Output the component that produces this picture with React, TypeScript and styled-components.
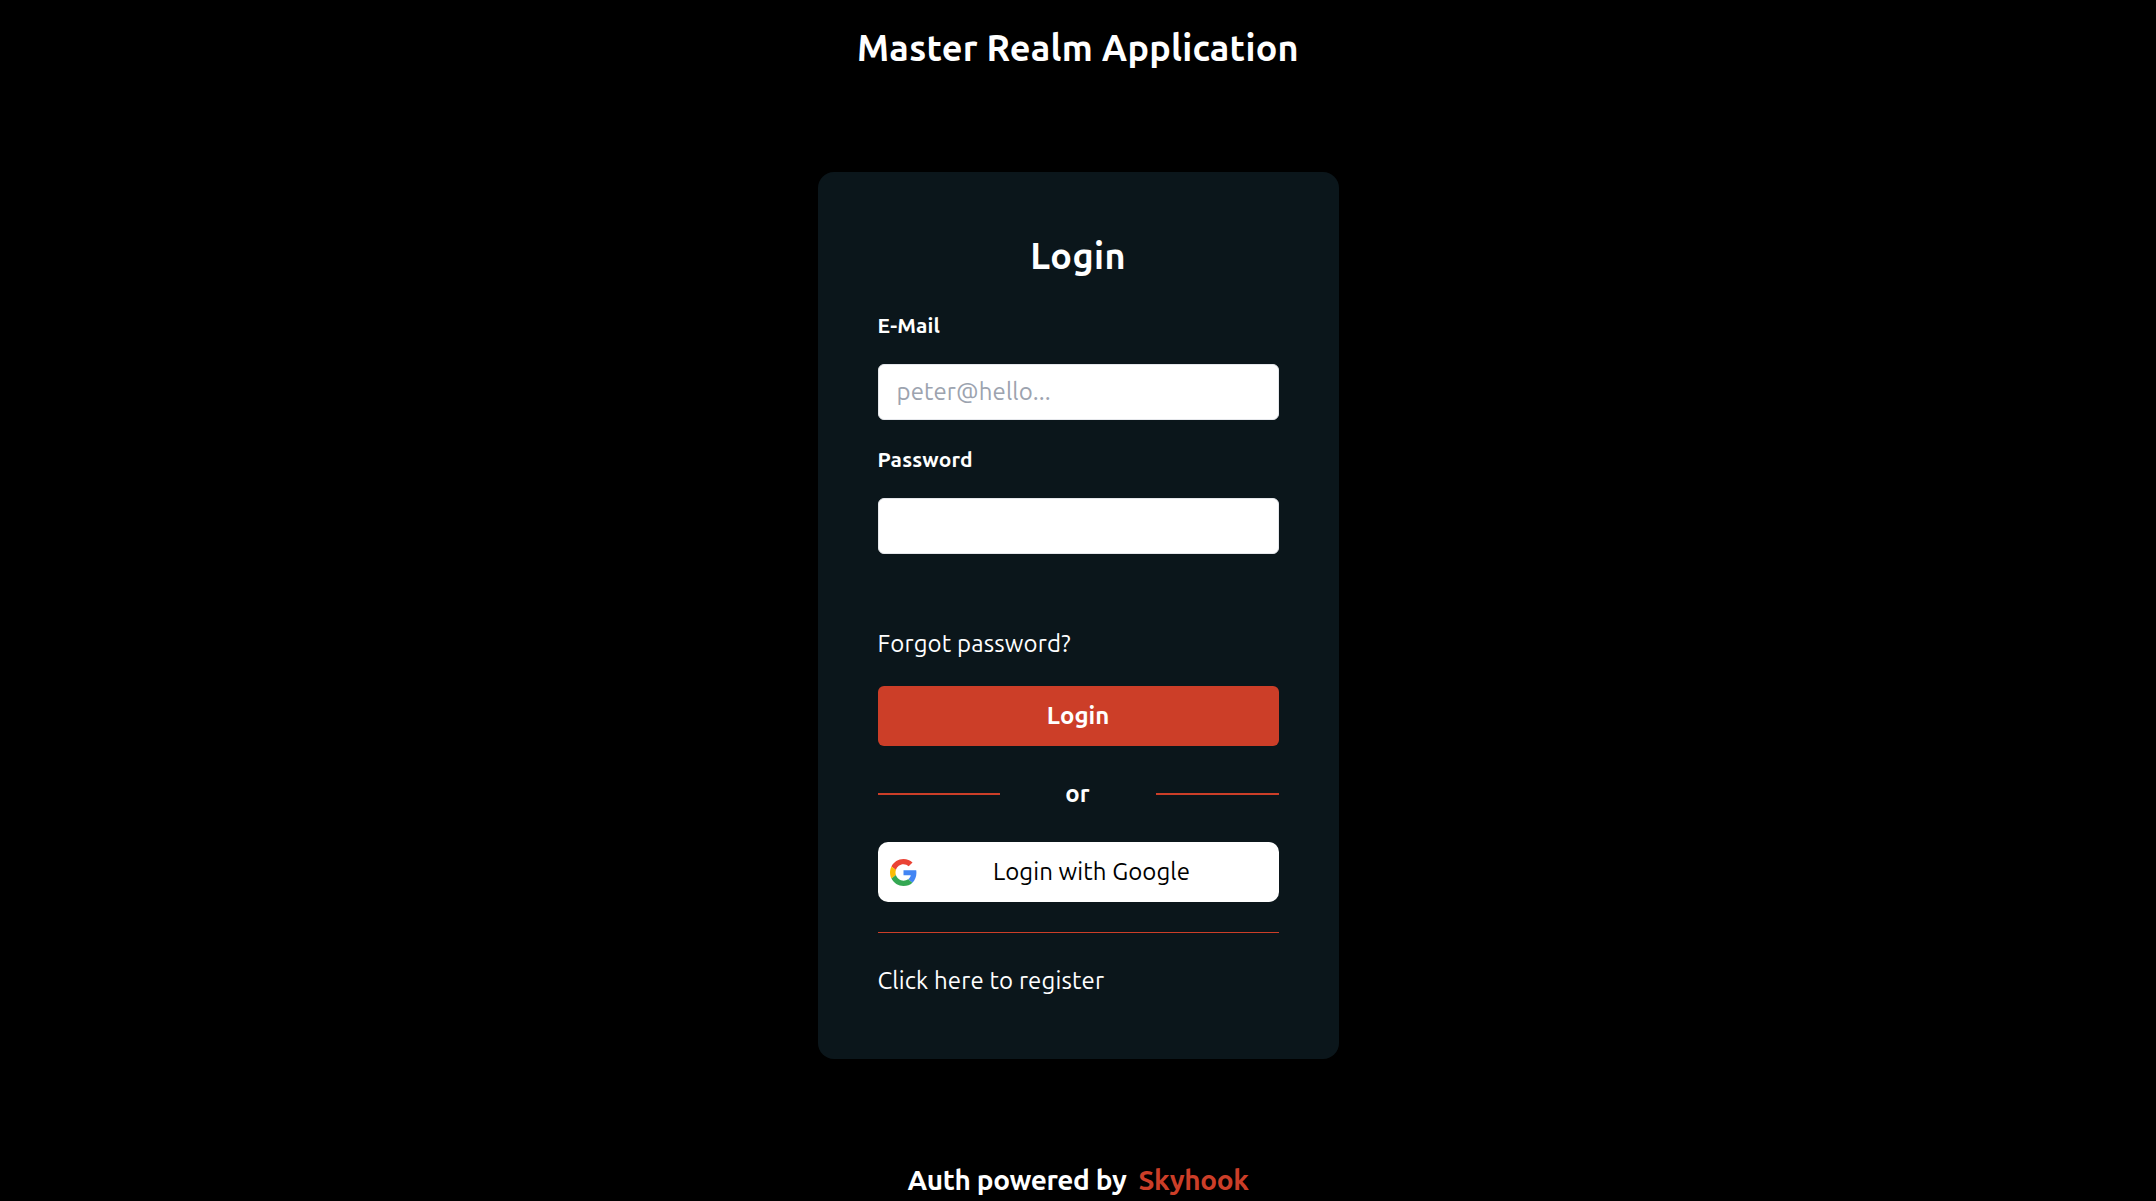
import React from "react";
import styled, { createGlobalStyle } from "styled-components";

const Global = createGlobalStyle`
  html, body { margin: 0; padding: 0; background: #000; }
  body { font-family: Ubuntu, "Noto Sans", "Open Sans", sans-serif; color: #fff; }
  * { box-sizing: border-box; }
`;

const Page = styled.div`
  height: 1201px;
  overflow: hidden;
  display: flex;
  flex-direction: column;
  align-items: center;
  background: #000;
`;

const Title = styled.h1`
  margin: 28px 0 0;
  height: 40px;
  line-height: 40px;
  font-size: 36px;
  font-weight: 700;
  letter-spacing: 0.27px;
  white-space: nowrap;
`;

const Card = styled.main`
  margin-top: 104px;
  width: 521px;
  height: 887px;
  padding: 60px;
  background: #0b161b;
  border-radius: 16px;
  display: flex;
  flex-direction: column;
`;

const Heading = styled.h2`
  margin: 0 0 34px;
  height: 48px;
  line-height: 48px;
  font-size: 36px;
  font-weight: 700;
  letter-spacing: 0.4px;
  text-align: center;
`;

const Field = styled.label`
  display: flex;
  flex-direction: column;
  & + & { margin-top: 28px; }
`;

const LabelText = styled.span`
  height: 24px;
  line-height: 22px;
  font-size: 21px;
  font-weight: 700;
  letter-spacing: 0.15px;
`;

const Input = styled.input`
  margin-top: 26px;
  height: 56px;
  width: 100%;
  padding: 0 18px 2px;
  border: 1px solid #e5e7eb;
  border-radius: 6px;
  background: #fff;
  font: inherit;
  font-size: 24px;
  letter-spacing: 0.1px;
  color: #111;
  &::placeholder { color: #9ca3af; opacity: 1; }
`;

const TextLink = styled.a<{ $top: number }>`
  display: block;
  margin-top: ${(p) => p.$top}px;
  height: 28px;
  line-height: 28px;
  font-size: 24px;
  letter-spacing: 0.15px;
  color: #fff;
  white-space: nowrap;
`;

const PrimaryButton = styled.button`
  margin-top: 28px;
  height: 60px;
  width: 100%;
  padding: 0 0 2px;
  border: 0;
  border-radius: 6px;
  background: #cc3e28;
  color: #fff;
  font: inherit;
  font-size: 24px;
  font-weight: 700;
`;

const OrRow = styled.div`
  margin-top: 32px;
  height: 32px;
  line-height: 30px;
  display: grid;
  grid-template-columns: 122px 1fr 123px;
  align-items: center;
  text-align: center;
  font-size: 24px;
  font-weight: 700;
`;

const OrLine = styled.span`
  height: 2px;
  background: #cc3e28;
`;

const GoogleButton = styled.button`
  margin-top: 32px;
  height: 60px;
  width: 100%;
  padding: 0 12px;
  border: 0;
  border-radius: 10px;
  background: #fff;
  color: #000;
  font: inherit;
  font-size: 24px;
  letter-spacing: 0.1px;
  display: flex;
  align-items: center;
`;

const GoogleLabel = styled.span`
  flex: 1;
  padding-bottom: 2px;
  text-align: center;
`;

const Divider = styled.hr`
  margin: 30px 0 0;
  border: 0;
  height: 1px;
  background: #cc3e28;
`;

const Footer = styled.footer`
  margin-top: 105px;
  height: 32px;
  line-height: 32px;
  font-size: 28px;
  font-weight: 700;
  letter-spacing: -0.37px;
  white-space: nowrap;
  display: flex;
  gap: 12px;
`;

const Brand = styled.span`
  color: #cc3e28;
`;

const GoogleIcon = () => (
  <svg width="27" height="27" viewBox="0 0 48 48" aria-hidden="true">
    <path fill="#EA4335" d="M24 9.5c3.54 0 6.71 1.22 9.21 3.6l6.85-6.85C35.9 2.38 30.47 0 24 0 14.62 0 6.51 5.38 2.56 13.22l7.98 6.19C12.43 13.72 17.74 9.5 24 9.5z" />
    <path fill="#4285F4" d="M46.98 24.55c0-1.57-.15-3.09-.38-4.55H24v9.02h12.94c-.58 2.96-2.26 5.48-4.78 7.18l7.73 6c4.51-4.18 7.09-10.36 7.09-17.65z" />
    <path fill="#FBBC05" d="M10.53 28.59c-.48-1.45-.76-2.99-.76-4.59s.27-3.14.76-4.59l-7.98-6.19C.92 16.46 0 20.12 0 24c0 3.88.92 7.54 2.56 10.78l7.97-6.19z" />
    <path fill="#34A853" d="M24 48c6.48 0 11.93-2.13 15.89-5.81l-7.73-6c-2.15 1.45-4.92 2.3-8.16 2.3-6.26 0-11.57-4.22-13.47-9.91l-7.98 6.19C6.51 42.62 14.62 48 24 48z" />
  </svg>
);

export default function App() {
  return (
    <Page>
      <Global />
      <Title>Master Realm Application</Title>
      <Card>
        <Heading>Login</Heading>
        <Field>
          <LabelText>E-Mail</LabelText>
          <Input placeholder="peter@hello..." />
        </Field>
        <Field>
          <LabelText>Password</LabelText>
          <Input type="password" />
        </Field>
        <TextLink $top={76}>Forgot password?</TextLink>
        <PrimaryButton>Login</PrimaryButton>
        <OrRow>
          <OrLine />
          <span>or</span>
          <OrLine />
        </OrRow>
        <GoogleButton>
          <GoogleIcon />
          <GoogleLabel>Login with Google</GoogleLabel>
        </GoogleButton>
        <Divider />
        <TextLink $top={34}>Click here to register</TextLink>
      </Card>
      <Footer>
        <span>Auth powered by</span>
        <Brand>Skyhook</Brand>
      </Footer>
    </Page>
  );
}
